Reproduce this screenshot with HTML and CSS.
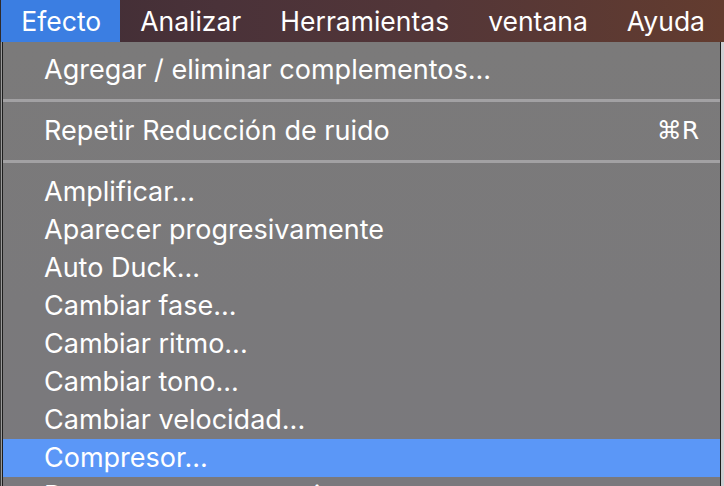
FILE: index.html
```html
<!DOCTYPE html>
<html lang="es">
<head>
<meta charset="utf-8">
<title>Menú Efecto</title>
<link rel="stylesheet" href="styles.css">
</head>
<body>
<div class="menubar">
  <span class="mb-edge"></span>
  <span class="mb-item active">Efecto</span>
  <span class="mb-item">Analizar</span>
  <span class="mb-item">Herramientas</span>
  <span class="mb-item">ventana</span>
  <span class="mb-item">Ayuda</span>
</div>
<div class="stage">
  <div class="side-left"></div>
  <div class="menu">
    <div class="item">Agregar / eliminar complementos...</div>
    <div class="sep"></div>
    <div class="item"><span>Repetir Reducción de ruido</span><span class="key">⌘R</span></div>
    <div class="sep"></div>
    <div class="item">Amplificar...</div>
    <div class="item">Aparecer progresivamente</div>
    <div class="item">Auto Duck...</div>
    <div class="item">Cambiar fase...</div>
    <div class="item">Cambiar ritmo...</div>
    <div class="item">Cambiar tono...</div>
    <div class="item">Cambiar velocidad...</div>
    <div class="item selected">Compresor...</div>
    <div class="item">Desaparecer progresivamente</div>
  </div>
  <div class="side-right"></div>
</div>
</body>
</html>
```

FILE: styles.css
```css
html, body {
  margin: 0;
  padding: 0;
  height: 486px;
  overflow: hidden;
}
body {
  background: #c9c9c9;
  font-family: Inter, "Noto Sans", "DejaVu Sans", sans-serif;
  color: #ffffff;
  -webkit-font-smoothing: antialiased;
}
.menubar {
  display: flex;
  align-items: stretch;
  height: 42px;
  background: linear-gradient(90deg, #3e2c34 0%, #4a3239 30%, #533638 60%, #633c2f 100%);
  font-size: 26.5px;
  line-height: 42px;
}
.mb-edge {
  width: 2px;
  background: #2e2a2c;
}
.mb-item {
  padding: 0 19px 0 20px;
  white-space: nowrap;
}
.mb-item.active {
  background: #3b7ee2;
}
.stage {
  display: flex;
  height: 444px;
  overflow: hidden;
}
.side-left {
  width: 1px;
  background: #3a3a3a;
  border-right: 1px solid #9a9a9a;
}
.menu {
  flex: 1;
  background: linear-gradient(180deg, #7b7a7a 0%, #7a797b 60%, #7a797d 100%);
  border-left: 1px solid #1e1e1e;
  border-right: 1px solid #1e1e1e;
  padding-top: 9px;
  font-size: 27px;
}
.side-right {
  width: 3px;
  background: #cfd0d4;
}
.item {
  display: flex;
  justify-content: space-between;
  height: 38px;
  line-height: 38px;
  padding: 0 21px 0 41px;
  white-space: nowrap;
}
.item.selected {
  background: #5b97f7;
}
.key {
  font-family: "DejaVu Sans", Inter, sans-serif;
  font-size: 25px;
}
.sep {
  height: 3px;
  margin: 10px 0 10px;
  background: #a2a1a3;
}
```
